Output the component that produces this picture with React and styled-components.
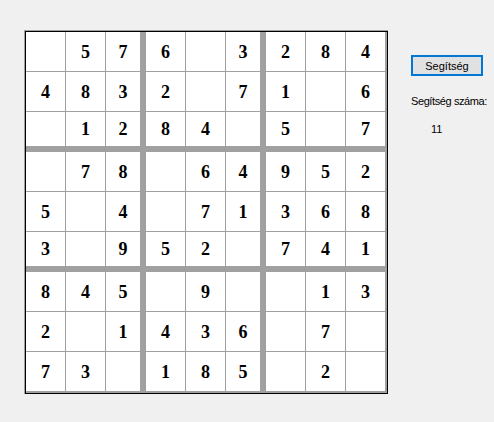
import React from "react";
import styled, { createGlobalStyle } from "styled-components";

const GlobalStyle = createGlobalStyle`
  html, body { margin: 0; padding: 0; background: #f0f0f0; }
  body { font-family: "Liberation Sans", Arial, sans-serif; }
`;

const Page = styled.div`
  display: flex;
  align-items: flex-start;
  padding: 30px 0 0 24px;
  width: 494px;
  height: 422px;
  box-sizing: border-box;
`;

const Frame = styled.div`
  border-left: 1px solid #a0a0a0;
  border-top: 1px solid #a0a0a0;
`;

const Board = styled.div`
  display: grid;
  grid-template-columns: repeat(9, auto);
  border: 1px solid #000;
`;

const Cell = styled.div`
  width: ${(p) => p.$w}px;
  height: ${(p) => p.$h}px;
  border-right: ${(p) => p.$br}px solid #a0a0a0;
  border-bottom: ${(p) => p.$bb}px solid #a0a0a0;
  background: #fff;
  display: flex;
  align-items: center;
  justify-content: center;
  font-family: "Liberation Serif", "Times New Roman", serif;
  font-weight: bold;
  font-size: 18px;
  color: #000;
  padding-top: 1px;
  box-sizing: content-box;
`;

const Side = styled.div`
  display: flex;
  flex-direction: column;
  align-items: flex-start;
  margin-left: 23px;
  margin-top: 25px;
`;

const Button = styled.button`
  width: 72px;
  height: 21px;
  padding: 0;
  border: 2px solid #0078d7;
  background: #e1e1e1;
  font-family: "Liberation Sans", Arial, sans-serif;
  font-size: 11px;
  color: #000;
`;

const Label = styled.div`
  margin-top: 19px;
  font-size: 11px;
  line-height: 13px;
  letter-spacing: -0.4px;
  color: #000;
`;

const Count = styled.div`
  margin-top: 15px;
  margin-left: 20px;
  font-size: 11px;
  line-height: 13px;
  color: #000;
`;

const grid = [
  "_576_3284",
  "4832_71_6",
  "_1284_5_7",
  "_78_64952",
  "5_4_71368",
  "3_952_741",
  "845_9__13",
  "2_1436_7_",
  "73_185_2_",
];

function dims(i) {
  if (i === 8) return [39, 2];
  if (i % 3 === 2) return [34, 6];
  return [39, 1];
}

export default function App() {
  return (
    <>
      <GlobalStyle />
      <Page>
        <Frame>
          <Board>
            {grid.map((row, r) =>
              row.split("").map((ch, c) => {
                const [w, br] = dims(c);
                const [h, bb] = dims(r);
                return (
                  <Cell key={`${r}-${c}`} $w={w} $h={h - 1} $br={br} $bb={bb}>
                    {ch === "_" ? "" : ch}
                  </Cell>
                );
              })
            )}
          </Board>
        </Frame>
        <Side>
          <Button>Segítség</Button>
          <Label>Segítség száma:</Label>
          <Count>11</Count>
        </Side>
      </Page>
    </>
  );
}
